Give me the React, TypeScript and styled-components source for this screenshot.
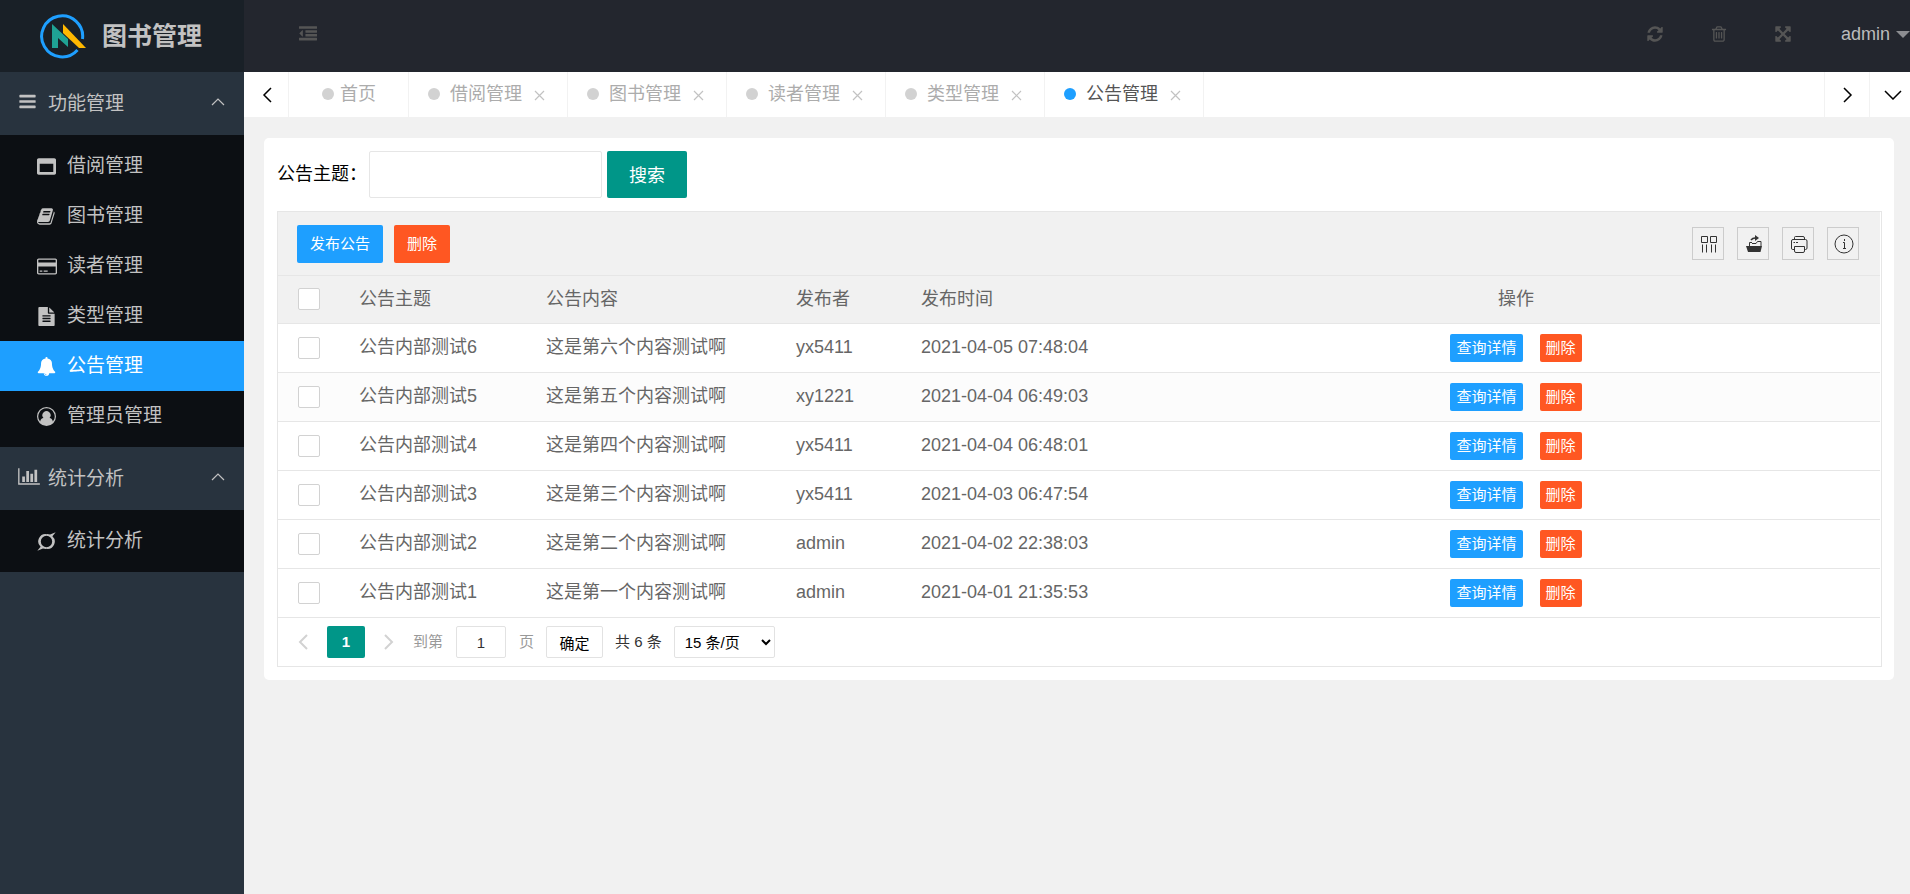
import React from 'react';
import styled, { createGlobalStyle } from 'styled-components';

const Global = createGlobalStyle`
  * { box-sizing: border-box; }
  body {
    margin: 0;
    background: #f1f1f1;
    color: #000;
    font-family: "Liberation Sans", "Noto Sans CJK SC", sans-serif;
    font-size: 18px;
    line-height: 24px;
  }
  button, input, select { font-family: inherit; margin: 0; }
  a { color: inherit; text-decoration: none; }
  svg { display: block; }
  ul { list-style: none; margin: 0; padding: 0; }
`;

const Page = styled.div`
  display: flex;
  min-height: 100vh;
`;

/* ---------- icons ---------- */
const ICONS = {
  bars: 'M1664 1344v128q0 26-19 45t-45 19h-1408q-26 0-45-19t-19-45v-128q0-26 19-45t45-19h1408q26 0 45 19t19 45zm0-512v128q0 26-19 45t-45 19h-1408q-26 0-45-19t-19-45v-128q0-26 19-45t45-19h1408q26 0 45 19t19 45zm0-512v128q0 26-19 45t-45 19h-1408q-26 0-45-19t-19-45v-128q0-26 19-45t45-19h1408q26 0 45 19t19 45z',
  window: 'M256 1408h1280v-768h-1280v768zm1536-1120v1216q0 66-47 113t-113 47h-1472q-66 0-113-47t-47-113v-1216q0-66 47-113t113-47h1472q66 0 113 47t47 113z',
  book: 'M1639 478q40 57 18 129l-275 906q-19 64-76.5 107.5t-122.5 43.5h-923q-77 0-148.5-53.5t-99.5-131.5q-24-67-2-127 0-4 3-27t4-37q1-8-3-21.5t-3-19.5q2-11 8-21t16.5-23.5 16.5-23.5q23-38 45-91.5t30-91.5q3-10 .5-30t-.5-28q3-11 17-28t17-23q21-36 42-92t25-90q1-9-2.5-32t.5-28q4-13 22-30.5t22-22.5q19-26 42.5-84.5t27.5-96.5q1-8-3-25.5t-2-26.5q2-8 9-18t18-23 17-21q8-12 16.5-30.5t15-35 16-36 19.5-32 26.5-23.5 36-11.5 47.5 5.5l-1 3q38-9 51-9h761q74 0 114 56t18 130l-274 906q-36 119-71.5 153.5t-128.5 34.5h-869q-27 0-38 15-11 16-1 43 24 70 144 70h923q29 0 56-15.5t35-41.5l300-987q7-22 5-57 38 15 59 43zm-1064 2q-4 13 2 22.5t20 9.5h608q13 0 25.5-9.5t16.5-22.5l21-64q4-13-2-22.5t-20-9.5h-608q-13 0-25.5 9.5t-16.5 22.5zm-83 256q-4 13 2 22.5t20 9.5h608q13 0 25.5-9.5t16.5-22.5l21-64q4-13-2-22.5t-20-9.5h-608q-13 0-25.5 9.5t-16.5 22.5z',
  card: 'M1760 128q66 0 113 47t47 113v1216q0 66-47 113t-113 47h-1600q-66 0-113-47t-47-113v-1216q0-66 47-113t113-47h1600zm-1600 128q-13 0-22.500 9.500t-9.500 22.500v224h1664v-224q0-13-9.500-22.500t-22.500-9.500h-1600zm1600 1280q13 0 22.500-9.500t9.500-22.500v-608h-1664v608q0 13 9.500 22.500t22.500 9.500h1600zm-1504-128v-128h256v128h-256zm384 0v-128h384v128h-384z',
  file: 'M1596 476q14 14 28 36h-472v-472q22 14 36 28zm-476 164h544v1056q0 40-28 68t-68 28h-1344q-40 0-68-28t-28-68v-1600q0-40 28-68t68-28h800v544q0 40 28 68t68 28zm160 736v-64q0-14-9-23t-23-9h-704q-14 0-23 9t-9 23v64q0 14 9 23t23 9h704q14 0 23-9t9-23zm0-256v-64q0-14-9-23t-23-9h-704q-14 0-23 9t-9 23v64q0 14 9 23t23 9h704q14 0 23-9t9-23zm0-256v-64q0-14-9-23t-23-9h-704q-14 0-23 9t-9 23v64q0 14 9 23t23 9h704q14 0 23-9t9-23z',
  bell: 'M912 1696q0-16-16-16-59 0-101.500-42.500t-42.500-101.500q0-16-16-16t-16 16q0 73 51.500 124.500t124.500 51.500q16 0 16-16zm816-288q0 52-38 90t-90 38h-448q0 106-75 181t-181 75-181-75-75-181h-448q-52 0-90-38t-38-90q50-42 91-88t85-119.500 74.500-158.500 50-206 19.500-260q0-152 117-282.500t307-158.500q-8-19-8-39 0-40 28-68t68-28 68 28 28 68q0 20-8 39 190 28 307 158.500t117 282.500q0 139 19.500 260t50 206 74.500 158.500 85 119.500 91 88z',
  user: 'M896 0a896 896 0 1 1 0 1792a896 896 0 1 1 0-1792zM896 128a768 768 0 0 0-600 1247q70-315 312-339a384 384 0 1 1 576 0q242 24 312 339a768 768 0 0 0-600-1247z',
  chart: 'M640 896v512h-256v-512h256zm384-512v1024h-256v-1024h256zm1024 1152v128h-2048v-1536h128v1408h1920zm-640-896v768h-256v-768h256zm384-384v1152h-256v-1152h256z',
  power: 'M1760 32L1452 400A690 690 0 0 1 900 1590Q740 1600 560 1560L32 1760L340 1392A690 690 0 0 1 892 202Q1052 192 1232 232ZM896 362a534 534 0 1 0 0 1068a534 534 0 1 0 0-1068z',
  outdent: 'M384 544v576q0 13-9.500 22.500t-22.500 9.500q-14 0-23-9l-288-288q-9-9-9-23t9-23l288-288q9-9 23-9 13 0 22.500 9.500t9.500 22.500zm1408 768v192q0 13-9.500 22.500t-22.500 9.500h-1728q-13 0-22.500-9.500t-9.500-22.500v-192q0-13 9.500-22.500t22.500-9.500h1728q13 0 22.500 9.500t9.500 22.500zm0-384v192q0 13-9.500 22.500t-22.500 9.500h-1088q-13 0-22.500-9.500t-9.500-22.500v-192q0-13 9.500-22.500t22.500-9.500h1088q13 0 22.500 9.500t9.500 22.500zm0-384v192q0 13-9.500 22.500t-22.500 9.500h-1088q-13 0-22.500-9.500t-9.500-22.500v-192q0-13 9.500-22.500t22.500-9.500h1088q13 0 22.500 9.500t9.500 22.500zm0-384v192q0 13-9.500 22.500t-22.500 9.500h-1728q-13 0-22.500-9.500t-9.500-22.500v-192q0-13 9.500-22.500t22.500-9.500h1728q13 0 22.500 9.500t9.500 22.500z',
  refresh: 'M1639 1056q0 5-1 7-64 268-268 434.500t-478 166.500q-146 0-282.500-55t-243.500-157l-129 129q-19 19-45 19t-45-19-19-45v-448q0-26 19-45t45-19h448q26 0 45 19t19 45-19 45l-137 137q71 66 161 102t187 36q134 0 250-65t186-179q11-17 53-117 8-23 30-23h192q13 0 22.500 9.500t9.500 22.500zm25-800v448q0 26-19 45t-45 19h-448q-26 0-45-19t-19-45 19-45l138-138q-148-137-349-137-134 0-250 65t-186 179q-11 17-53 117-8 23-30 23h-199q-13 0-22.500-9.500t-9.500-22.500v-7q65-268 270-434.500t480-166.500q146 0 284 55.500t245 156.500l130-129q19-19 45-19t45 19 19 45z',
  trash: 'M704 736v576q0 14-9 23t-23 9h-64q-14 0-23-9t-9-23v-576q0-14 9-23t23-9h64q14 0 23 9t9 23zm256 0v576q0 14-9 23t-23 9h-64q-14 0-23-9t-9-23v-576q0-14 9-23t23-9h64q14 0 23 9t9 23zm256 0v576q0 14-9 23t-23 9h-64q-14 0-23-9t-9-23v-576q0-14 9-23t23-9h64q14 0 23 9t9 23zm128 724v-948h-896v948q0 22 7 40.500t14.500 27 10.500 8.500h832q3 0 10.500-8.500t14.500-27 7-40.500zm-672-1076h448l-48-117q-7-9-17-11h-317q-10 2-17 11zm928 32v64q0 14-9 23t-23 9h-96v948q0 83-47 143.500t-113 60.500h-832q-66 0-113-58.500t-47-141.500v-952h-96q-14 0-23-9t-9-23v-64q0-14 9-23t23-9h309l70-167q15-37 54-63t79-26h320q40 0 79 26t54 63l70 167h309q14 0 23 9t9 23z',
  expand: 'M1411 541l-355 355 355 355 144-144q29-31 70-14 39 17 39 59v448q0 26-19 45t-45 19h-448q-42 0-59-40-17-39 14-69l144-144-355-355-355 355 144 144q31 30 14 69-17 40-59 40h-448q-26 0-45-19t-19-45v-448q0-42 40-59 39-17 69 14l144 144 355-355-355-355-144 144q-19 19-45 19-12 0-24-5-40-17-40-59v-448q0-26 19-45t45-19h448q42 0 59 40 17 39-14 69l-144 144 355 355 355-355-144-144q-31-30-14-69 17-40 59-40h448q26 0 45 19t19 45v448q0 42-39 59-13 5-25 5-26 0-45-19z',
};
type IconName = keyof typeof ICONS;
const WIDE: Partial<Record<IconName, number>> = { card: 1920, chart: 2048 };

const Icon = ({ name, size = 19 }: { name: IconName; size?: number }) => {
  const w = WIDE[name] ?? 1792;
  return (
    <svg width={Math.round((size * w) / 1792)} height={size} viewBox={`0 0 ${w} 1792`} fill="currentColor" fillRule="evenodd" aria-hidden="true">
      <path d={ICONS[name]} />
    </svg>
  );
};

const Line = ({ d, w, h, stroke = 1.5 }: { d: string; w: number; h: number; stroke?: number }) => (
  <svg width={w} height={h} viewBox={`0 0 ${w} ${h}`} fill="none" stroke="currentColor" strokeWidth={stroke} aria-hidden="true">
    <path d={d} />
  </svg>
);

const Logo = () => (
  <svg width="48" height="46" viewBox="0 0 48 46" fill="none" aria-hidden="true">
    <path d="M37.500 37A20.500 20.500 0 1 1 42.500 26" stroke="#1e9fff" strokeWidth="3" />
    <path d="M12 11L28 26V34L18 25V35H12Z" fill="#1fa294" />
    <path d="M23 11L46 35H39L23 20Z" fill="#ffb800" />
  </svg>
);

/* ---------- sidebar ---------- */
const Sidebar = styled.aside`
  flex: 0 0 244px;
  background: #28333e;
  color: #c2c2c2;
  font-size: 19px;
`;
const Brand = styled.a`
  display: flex;
  align-items: center;
  gap: 14px;
  height: 72px;
  padding-left: 40px;
  background: #192027;
  font-size: 25px;
  font-weight: 700;
`;
const Group = styled.button`
  display: flex;
  align-items: center;
  gap: 10px;
  width: 100%;
  height: 63px;
  padding: 0 19px 4px 18px;
  border: 0;
  background: none;
  color: inherit;
  font-size: 19px;
`;
const GroupIcon = styled.span`
  flex: 0 0 20px;
  min-width: 0;
`;
const GroupText = styled.span`
  flex: 1;
  text-align: left;
`;
const Sub = styled.ul`
  padding: 6px 0;
  background: #0c0f13;
`;
const Item = styled.a<{ $active?: boolean }>`
  display: flex;
  align-items: center;
  height: 50px;
  padding-left: 37px;
  gap: 10px;
  background: ${(p) => (p.$active ? '#1e9fff' : 'transparent')};
  color: ${(p) => (p.$active ? '#fff' : 'inherit')};
`;
const ItemIcon = styled.span`
  flex: 0 0 20px;
`;

type Entry = [IconName, string];
const MENU: { icon: IconName; title: string; items: Entry[] }[] = [
  {
    icon: 'bars',
    title: '功能管理',
    items: [
      ['window', '借阅管理'],
      ['book', '图书管理'],
      ['card', '读者管理'],
      ['file', '类型管理'],
      ['bell', '公告管理'],
      ['user', '管理员管理'],
    ],
  },
  { icon: 'chart', title: '统计分析', items: [['power', '统计分析']] },
];

/* ---------- header and tabs ---------- */
const Main = styled.div`
  flex: 1;
  min-width: 0;
  overflow: hidden;
`;
const Header = styled.header`
  display: flex;
  align-items: center;
  justify-content: space-between;
  height: 72px;
  padding: 0 0 4px 55px;
  background: #23262e;
`;
const IconButton = styled.button`
  padding: 0;
  border: 0;
  background: none;
  color: #555;
`;
const HeaderRight = styled.div`
  display: flex;
  align-items: center;
  gap: 46px;
`;
const User = styled.button`
  display: flex;
  align-items: center;
  gap: 6px;
  margin-left: 3px;
  padding: 0;
  border: 0;
  background: none;
  color: #bbb;
  font-size: 18px;
`;
const Caret = styled.span`
  border: 7px solid transparent;
  border-top-color: #8c8d91;
  border-bottom-width: 0;
`;
const TabBar = styled.nav`
  display: flex;
  height: 45px;
  margin-right: -4px;
  background: #fff;
`;
const TabArrow = styled.button<{ $side: 'left' | 'right' }>`
  display: flex;
  align-items: center;
  justify-content: center;
  width: 45px;
  padding: 0 0 0 2px;
  border: 0 solid #f2f2f2;
  border-${(p) => (p.$side === 'left' ? 'right' : 'left')}-width: 1px;
  background: none;
  color: #000;
`;
const Tabs = styled.div`
  flex: 1;
  display: flex;
`;
const Tab = styled.div<{ $home?: boolean; $active?: boolean }>`
  display: flex;
  align-items: center;
  gap: ${(p) => (p.$home ? 6 : 10)}px;
  width: ${(p) => (p.$home ? 120 : 159)}px;
  padding: 0 0 2px ${(p) => (p.$home ? 33 : 19)}px;
  border-right: 1px solid #f2f2f2;
  color: ${(p) => (p.$active ? '#555' : '#acacac')};
`;
const Dot = styled.span<{ $active?: boolean }>`
  width: 12px;
  height: 12px;
  border-radius: 50%;
  background: ${(p) => (p.$active ? '#1e9fff' : '#d2d2d2')};
`;
const Close = styled.button`
  padding: 4px 0 0 2px;
  border: 0;
  background: none;
  color: #c2c2c2;
`;

/* ---------- content ---------- */
const Card = styled.main`
  margin: 21px 16px 0 20px;
  padding: 13px 12px 13px 13px;
  border-radius: 5px;
  background: #fff;
`;
const Search = styled.form`
  display: flex;
  align-items: center;
  margin-bottom: 13px;
`;
const SearchLabel = styled.label`
  width: 92px;
  padding-bottom: 2px;
`;
const SearchInput = styled.input`
  width: 233px;
  height: 47px;
  margin-right: 5px;
  padding: 0 12px;
  border: 1px solid #e6e6e6;
  border-radius: 2px;
  font-size: 18px;
`;
const SearchButton = styled.button`
  width: 80px;
  height: 47px;
  padding: 0 0 2px;
  border: 0;
  border-radius: 2px;
  background: #009688;
  color: #fff;
  font-size: 18px;
`;
const Panel = styled.section`
  padding-right: 1px;
  border: 1px solid #e6e6e6;
`;
const Toolbar = styled.div`
  display: flex;
  align-items: center;
  justify-content: space-between;
  height: 64px;
  padding: 0 21px 0 19px;
  border-bottom: 1px solid #e6e6e6;
  background: #f1f1f1;
`;
const Buttons = styled.div<{ $gap: number; $center?: boolean }>`
  display: flex;
  justify-content: ${(p) => (p.$center ? 'center' : 'flex-start')};
  gap: ${(p) => p.$gap}px;
`;
const Action = styled.button<{ $danger?: boolean; $small?: boolean }>`
  height: ${(p) => (p.$small ? 28 : 38)}px;
  padding: 0 ${(p) => (p.$small ? 6 : 13)}px;
  border: 0;
  border-radius: 2px;
  background: ${(p) => (p.$danger ? '#ff5722' : '#1e9fff')};
  color: #fff;
  font-size: 15px;
  line-height: 20px;
`;
const Tool = styled.button`
  display: flex;
  align-items: center;
  justify-content: center;
  width: 32px;
  height: 33px;
  padding: 0 0 0 1px;
  border: 1px solid #ccc;
  background: none;
  color: #333;
`;
const Table = styled.table`
  width: 100%;
  table-layout: fixed;
  border-collapse: separate;
  border-spacing: 0;
  color: #666;
`;
const Col = styled.col<{ $w?: number }>`
  width: ${(p) => (p.$w ? `${p.$w}px` : 'auto')};
`;
const Row = styled.tr<{ $tone?: 'head' | 'even' }>`
  height: ${(p) => (p.$tone === 'head' ? 48 : 49)}px;
  background: ${(p) => (p.$tone === 'head' ? '#f1f1f1' : p.$tone === 'even' ? '#fcfcfc' : '#fff')};
`;
const Th = styled.th<{ $center?: boolean }>`
  padding: 0 19px 2px;
  border-bottom: 1px solid #e6e6e6;
  font-weight: 400;
  text-align: ${(p) => (p.$center ? 'center' : 'left')};
`;
const Td = styled.td<{ $text?: boolean }>`
  padding: 0 19px ${(p) => (p.$text ? 2 : 0)}px;
  border-bottom: 1px solid #e6e6e6;
`;
const Check = styled.input`
  display: block;
  appearance: none;
  width: 22px;
  height: 22px;
  margin: 0 0 0 1px;
  border: 1px solid #d2d2d2;
  border-radius: 2px;
  background: #fff;
`;
const Pager = styled.div`
  display: flex;
  align-items: center;
  height: 48px;
  padding-left: 20px;
  color: #333;
  font-size: 15px;
`;
const PageArrow = styled.button`
  padding: 0;
  border: 0;
  background: none;
  color: #d2d2d2;
`;
const Current = styled.span`
  width: 38px;
  height: 32px;
  margin: 0 19px;
  border-radius: 2px;
  background: #009688;
  color: #fff;
  font-weight: 700;
  line-height: 32px;
  text-align: center;
`;
const Jump = styled.label`
  display: flex;
  align-items: center;
  gap: 13px;
  margin: 0 12px 0 19px;
  color: #999;
`;
const PageInput = styled.input`
  width: 50px;
  height: 32px;
  padding: 0;
  border: 1px solid #e2e2e2;
  border-radius: 2px;
  color: #333;
  font-size: 15px;
  text-align: center;
`;
const Confirm = styled.button`
  width: 57px;
  height: 32px;
  margin-right: 12px;
  padding: 0;
  border: 1px solid #e2e2e2;
  border-radius: 2px;
  background: #fff;
  color: #000;
  font-size: 15px;
`;
const Select = styled.select`
  width: 101px;
  height: 32px;
  margin-left: 12px;
  padding: 0 0 0 6px;
  border: 1px solid #e2e2e2;
  border-radius: 2px;
  background: #fff;
  color: #000;
  font-size: 15px;
`;

const TABS = ['首页', '借阅管理', '图书管理', '读者管理', '类型管理', '公告管理'];
const ROWS = [
  ['公告内部测试6', '这是第六个内容测试啊', 'yx5411', '2021-04-05 07:48:04'],
  ['公告内部测试5', '这是第五个内容测试啊', 'xy1221', '2021-04-04 06:49:03'],
  ['公告内部测试4', '这是第四个内容测试啊', 'yx5411', '2021-04-04 06:48:01'],
  ['公告内部测试3', '这是第三个内容测试啊', 'yx5411', '2021-04-03 06:47:54'],
  ['公告内部测试2', '这是第二个内容测试啊', 'admin', '2021-04-02 22:38:03'],
  ['公告内部测试1', '这是第一个内容测试啊', 'admin', '2021-04-01 21:35:53'],
];

export default function App() {
  return (
    <Page>
      <Global />
      <Sidebar>
        <Brand href="#">
          <Logo />
          图书管理
        </Brand>
        {MENU.map((g) => (
          <React.Fragment key={g.title}>
            <Group>
              <GroupIcon><Icon name={g.icon} /></GroupIcon>
              <GroupText>{g.title}</GroupText>
              <Line w={14} h={9} d="M1 8L7 2L13 8" stroke={1.2} />
            </Group>
            <Sub>
              {g.items.map(([icon, text]) => (
                <li key={text}>
                  <Item href="#" $active={text === '公告管理'}>
                    <ItemIcon><Icon name={icon} /></ItemIcon>
                    {text}
                  </Item>
                </li>
              ))}
            </Sub>
          </React.Fragment>
        ))}
      </Sidebar>

      <Main>
        <Header>
          <IconButton aria-label="收起菜单"><Icon name="outdent" size={18} /></IconButton>
          <HeaderRight>
            <IconButton aria-label="刷新"><Icon name="refresh" size={18} /></IconButton>
            <IconButton aria-label="清理"><Icon name="trash" size={18} /></IconButton>
            <IconButton aria-label="全屏"><Icon name="expand" size={18} /></IconButton>
            <User>admin<Caret /></User>
          </HeaderRight>
        </Header>

        <TabBar>
          <TabArrow $side="left" aria-label="向左"><Line w={10} h={16} d="M9 1L2 8L9 15" /></TabArrow>
          <Tabs>
            {TABS.map((t, i) => {
              const active = i === TABS.length - 1;
              return (
                <Tab key={t} $home={i === 0} $active={active}>
                  <Dot $active={active} />
                  <a href="#">{t}</a>
                  {i > 0 && <Close aria-label="关闭"><Line w={11} h={11} d="M1 1L10 10M10 1L1 10" stroke={1.2} /></Close>}
                </Tab>
              );
            })}
          </Tabs>
          <TabArrow $side="right" aria-label="向右"><Line w={10} h={16} d="M1 1L8 8L1 15" /></TabArrow>
          <TabArrow $side="right" aria-label="更多"><Line w={18} h={10} d="M1 1L9 9L17 1" /></TabArrow>
        </TabBar>

        <Card>
          <Search>
            <SearchLabel htmlFor="subject">公告主题：</SearchLabel>
            <SearchInput id="subject" />
            <SearchButton type="button">搜索</SearchButton>
          </Search>

          <Panel>
            <Toolbar>
              <Buttons $gap={11}>
                <Action>发布公告</Action>
                <Action $danger>删除</Action>
              </Buttons>
              <Buttons $gap={13}>
                <Tool aria-label="筛选列">
                  <Line w={18} h={18} stroke={1} d="M1.500 1.500h6v6h-6zM10.500 1.500h6v6h-6zM2.500 9.500v8M6.500 9.500v8M11.500 9.500v8M15.500 9.500v8" />
                </Tool>
                <Tool aria-label="导出">
                  <svg width="18" height="18" viewBox="0 0 18 18" fill="none" stroke="currentColor" aria-hidden="true">
                    <path d="M1 11H17L15.500 17H3Z" fill="currentColor" stroke="none" />
                    <path d="M4.500 11V7.500H7M16 11V6.500H12.500L11 8.500H7" />
                    <path d="M6 5Q8 2.500 11 3" strokeWidth="1.500" />
                    <path d="M10 0L14 3L10 6Z" fill="currentColor" stroke="none" />
                  </svg>
                </Tool>
                <Tool aria-label="打印">
                  <Line w={18} h={18} stroke={1} d="M4.500 4.500V2.500Q4.500 1.500 5.500 1.500H13Q14.500 1.500 14.500 3V4.500M4.500 14.500H2.500Q1.500 14.500 1.500 13V6Q1.500 4.500 3 4.500H15.500Q17 4.500 17 6V13Q17 14.500 15.500 14.500H14.500M4.500 11.500H14.500V16Q14.500 17.500 13 17.500H6Q4.500 17.500 4.500 16ZM3.500 7.500H5M6 7.500H8" />
                </Tool>
                <Tool aria-label="提示">
                  <Line w={20} h={20} stroke={1} d="M10 1A9 9 0 1 1 10 19A9 9 0 1 1 10 1ZM10.500 5V7M9 8.500H10.500V14M9 14.500H12" />
                </Tool>
              </Buttons>
            </Toolbar>

            <Table>
              <colgroup>
                <Col $w={62} />
                <Col $w={187} />
                <Col $w={250} />
                <Col $w={125} />
                <Col $w={250} />
                <Col />
              </colgroup>
              <thead>
                <Row $tone="head">
                  <Th><Check type="checkbox" aria-label="全选" /></Th>
                  <Th>公告主题</Th>
                  <Th>公告内容</Th>
                  <Th>发布者</Th>
                  <Th>发布时间</Th>
                  <Th $center>操作</Th>
                </Row>
              </thead>
              <tbody>
                {ROWS.map((r, i) => (
                  <Row key={r[0]} $tone={i === 1 ? 'even' : undefined}>
                    <Td><Check type="checkbox" aria-label={r[0]} /></Td>
                    {r.map((c) => <Td key={c} $text>{c}</Td>)}
                    <Td>
                      <Buttons $gap={17} $center>
                        <Action $small>查询详情</Action>
                        <Action $small $danger>删除</Action>
                      </Buttons>
                    </Td>
                  </Row>
                ))}
              </tbody>
            </Table>

            <Pager>
              <PageArrow aria-label="上一页"><Line w={10} h={16} d="M9 1L2 8L9 15" stroke={2} /></PageArrow>
              <Current>1</Current>
              <PageArrow aria-label="下一页"><Line w={10} h={16} d="M1 1L8 8L1 15" stroke={2} /></PageArrow>
              <Jump>到第<PageInput defaultValue="1" />页</Jump>
              <Confirm>确定</Confirm>
              共 6 条
              <Select aria-label="每页条数" defaultValue="15">
                <option value="15">15 条/页</option>
                <option value="30">30 条/页</option>
              </Select>
            </Pager>
          </Panel>
        </Card>
      </Main>
    </Page>
  );
}
